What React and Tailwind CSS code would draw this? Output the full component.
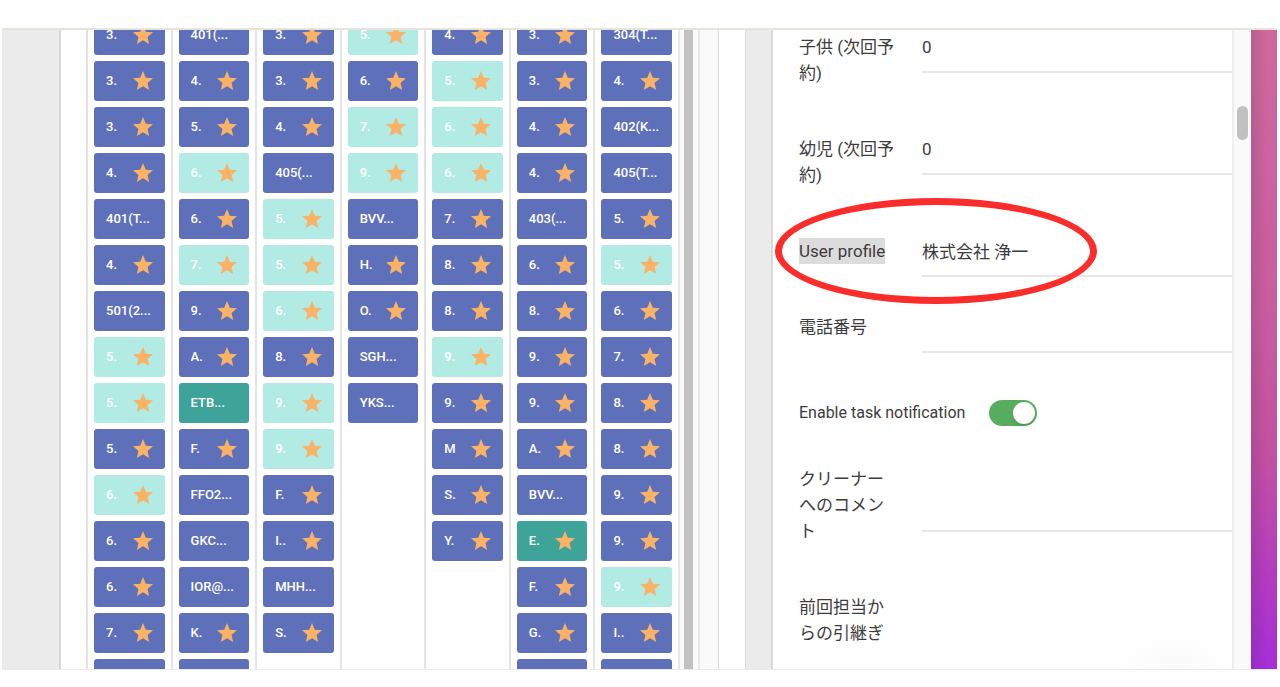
import React, { useState } from 'react';

// "*" = starred booking, "~" = light teal, "!" = dark teal
const columns = [
  ['3.*', '3.*', '3.*', '4.*', '401(T...', '4.*', '501(2...', '5.*~', '5.*~', '5.*', '6.*~', '6.*', '6.*', '7.*', ''],
  ['401(...', '4.*', '5.*', '6.*~', '6.*', '7.*~', '9.*', 'A.*', 'ETB...!', 'F.*', 'FFO2...', 'GKC...', 'IOR@...', 'K.*', ''],
  ['3.*', '3.*', '4.*', '405(...', '5.*~', '5.*~', '6.*~', '8.*', '9.*~', '9.*~', 'F.*', 'I..*', 'MHH...', 'S.*'],
  ['5.*~', '6.*', '7.*~', '9.*~', 'BVV...', 'H.*', 'O.*', 'SGH...', 'YKS...'],
  ['4.*', '5.*~', '6.*~', '6.*~', '7.*', '8.*', '8.*', '9.*~', '9.*', 'M*', 'S.*', 'Y.*'],
  ['3.*', '3.*', '4.*', '4.*', '403(...', '6.*', '8.*', '9.*', '9.*', 'A.*', 'BVV...', 'E.*!', 'F.*', 'G.*', ''],
  ['304(T...', '4..*', '402(K...', '405(T...', '5..*', '5.*~', '6..*', '7..*', '8..*', '8..*', '9..*', '9..*', '9.*~', 'I...*', ''],
];

const chipColor = (item) => {
  if (item.includes('~')) return 'bg-[#b2eae4]';
  if (item.includes('!')) return 'bg-[#3ea399]';
  return 'bg-[#5f70ba]';
};

const Star = () => (
  <svg viewBox="0 0 24 24" className="w-6 h-6 shrink-0" fill="#f9b266" aria-hidden="true">
    <path d="M12 17.27 18.18 21l-1.64-7.03L22 9.24l-7.19-.61L12 2 9.19 8.63 2 9.24l5.46 4.73L5.82 21z" />
  </svg>
);

const Chip = ({ item }) => {
  const starred = item.includes('*');
  const text = item.replace(/[*~!]/g, '');

  return (
    <button
      type="button"
      aria-label={text || 'Booking'}
      className={`${chipColor(item)} flex items-center justify-between w-full h-10 shrink-0 pl-3 pr-[10px] rounded-[3px] text-white text-[13px] font-medium`}
    >
      <span className={starred ? 'w-3 overflow-hidden whitespace-nowrap text-left' : 'whitespace-nowrap'}>{text}</span>
      {starred && <Star />}
    </button>
  );
};

const Board = () => (
  <section className="flex min-w-0 overflow-hidden bg-white border-l-2 border-[#d6d6d6] pl-[25px]">
    <div className="grid grid-cols-7 flex-1 min-w-0">
      {columns.map((items, i) => (
        <div key={i} className="border-l-2 border-[#e4e4e4] px-[6px] min-w-0">
          <div className="-mt-[15px] flex flex-col gap-[6px]">
            {items.map((item, j) => (
              <Chip key={j} item={item} />
            ))}
          </div>
        </div>
      ))}
    </div>
    <div className="w-[22px] shrink-0 bg-[#fafafa] border-x-2 border-[#e8e8e8] pl-1 pr-[5px]">
      <div className="h-full bg-[#c1c1c1]" />
    </div>
    <div className="w-[19px] shrink-0 bg-[#fafafa] border-r border-[#dcdcdc]" />
    <div className="w-[26px] shrink-0" />
  </section>
);

const Field = ({ id, label, value = '', selected }) => (
  <div className="flex items-start gap-[26px] mb-[50px]">
    <label htmlFor={id} className="w-[97px] shrink-0 text-[17px] leading-[26px]">
      <span className={selected ? 'inline-block bg-[#dcdcdc]' : ''}>{label}</span>
    </label>
    <input
      id={id}
      type="text"
      defaultValue={value}
      className="flex-1 min-w-0 h-[39px] -mb-[13px] pb-3 border-b-2 border-[#e6e6e6] bg-transparent text-[17px] leading-[26px] outline-none"
    />
  </div>
);

const CommentField = ({ id, label, rows }) => (
  <div className="flex items-start gap-[26px] mb-[50px]">
    <label htmlFor={id} className="w-[97px] shrink-0 text-[17px] leading-[26px]">{label}</label>
    <textarea
      id={id}
      rows={rows}
      className="flex-1 min-w-0 pb-3 border-b-2 border-[#e6e6e6] bg-transparent text-[17px] leading-[26px] resize-none outline-none"
    />
  </div>
);

const Details = () => {
  const [notify, setNotify] = useState(true);

  return (
    <section className="flex min-w-0 overflow-hidden bg-white border-l-2 border-[#d9d9d9]">
      <form className="flex-1 min-w-0 h-full overflow-hidden pl-[26px] pt-1 text-[#3c3c3c] bg-[radial-gradient(circle_at_402px_104%,#f8f8f8,#ffffff_70px)]">
        <Field id="children" label="子供 (次回予約)" value="0" />
        <Field id="infants" label="幼児 (次回予約)" value="0" />
        <div className="relative">
          <Field id="profile" label="User profile" value="株式会社 浄一" selected />
          <div className="absolute -left-6 -top-10 w-[322px] h-[106px] border-[7px] border-[#fb2d2a] rounded-[50%] pointer-events-none" />
        </div>
        <Field id="phone" label="電話番号" />
        <div className="flex items-center gap-6 pt-[10px] mb-10">
          <label htmlFor="notify" className="text-[16px] leading-[26px]">Enable task notification</label>
          <input
            id="notify"
            type="checkbox"
            role="switch"
            checked={notify}
            onChange={(e) => setNotify(e.target.checked)}
            className="appearance-none flex items-center w-12 h-[26px] px-[2px] rounded-full bg-[#bdbdbd] checked:bg-[#57ad5e] checked:justify-end before:block before:w-[22px] before:h-[22px] before:rounded-full before:bg-white before:shadow-md"
          />
        </div>
        <CommentField id="comment" label="クリーナーへのコメント" rows={2} />
        <CommentField id="handover" label="前回担当からの引継ぎ" rows={4} />
      </form>
      <div className="w-[19px] shrink-0 bg-[#fafafa] border-l-2 border-[#eeeeee] pt-[76px] pl-[3px]">
        <div className="w-[11px] h-[34px] rounded-full bg-[#c1c1c1]" />
      </div>
    </section>
  );
};

const App = () => {
  return (
    <div className="h-screen flex flex-col bg-white pt-7 pb-[17px] pl-[2px] pr-[3px] font-[Roboto,'Noto_Sans_CJK_JP',sans-serif]">
      <main className="flex-1 min-h-0 overflow-hidden grid grid-rows-[minmax(0,1fr)] grid-cols-[57px_minmax(0,686fr)_26px_minmax(0,480fr)_26px] border-t-2 border-b border-t-[#e8e4dc] border-b-[#ececec]">
        <div className="bg-[#ebebeb]" />
        <Board />
        <div className="bg-[#ebebeb] border-l border-[#dadada]" />
        <Details />
        <div className="bg-[linear-gradient(to_right,#00000018,#00000000_16px),linear-gradient(to_bottom,#d0689d,#c95c9f_45%,#c350a2_67%,#b53cc0_85%,#a52ed8)]" />
      </main>
    </div>
  );
};

export default App;
